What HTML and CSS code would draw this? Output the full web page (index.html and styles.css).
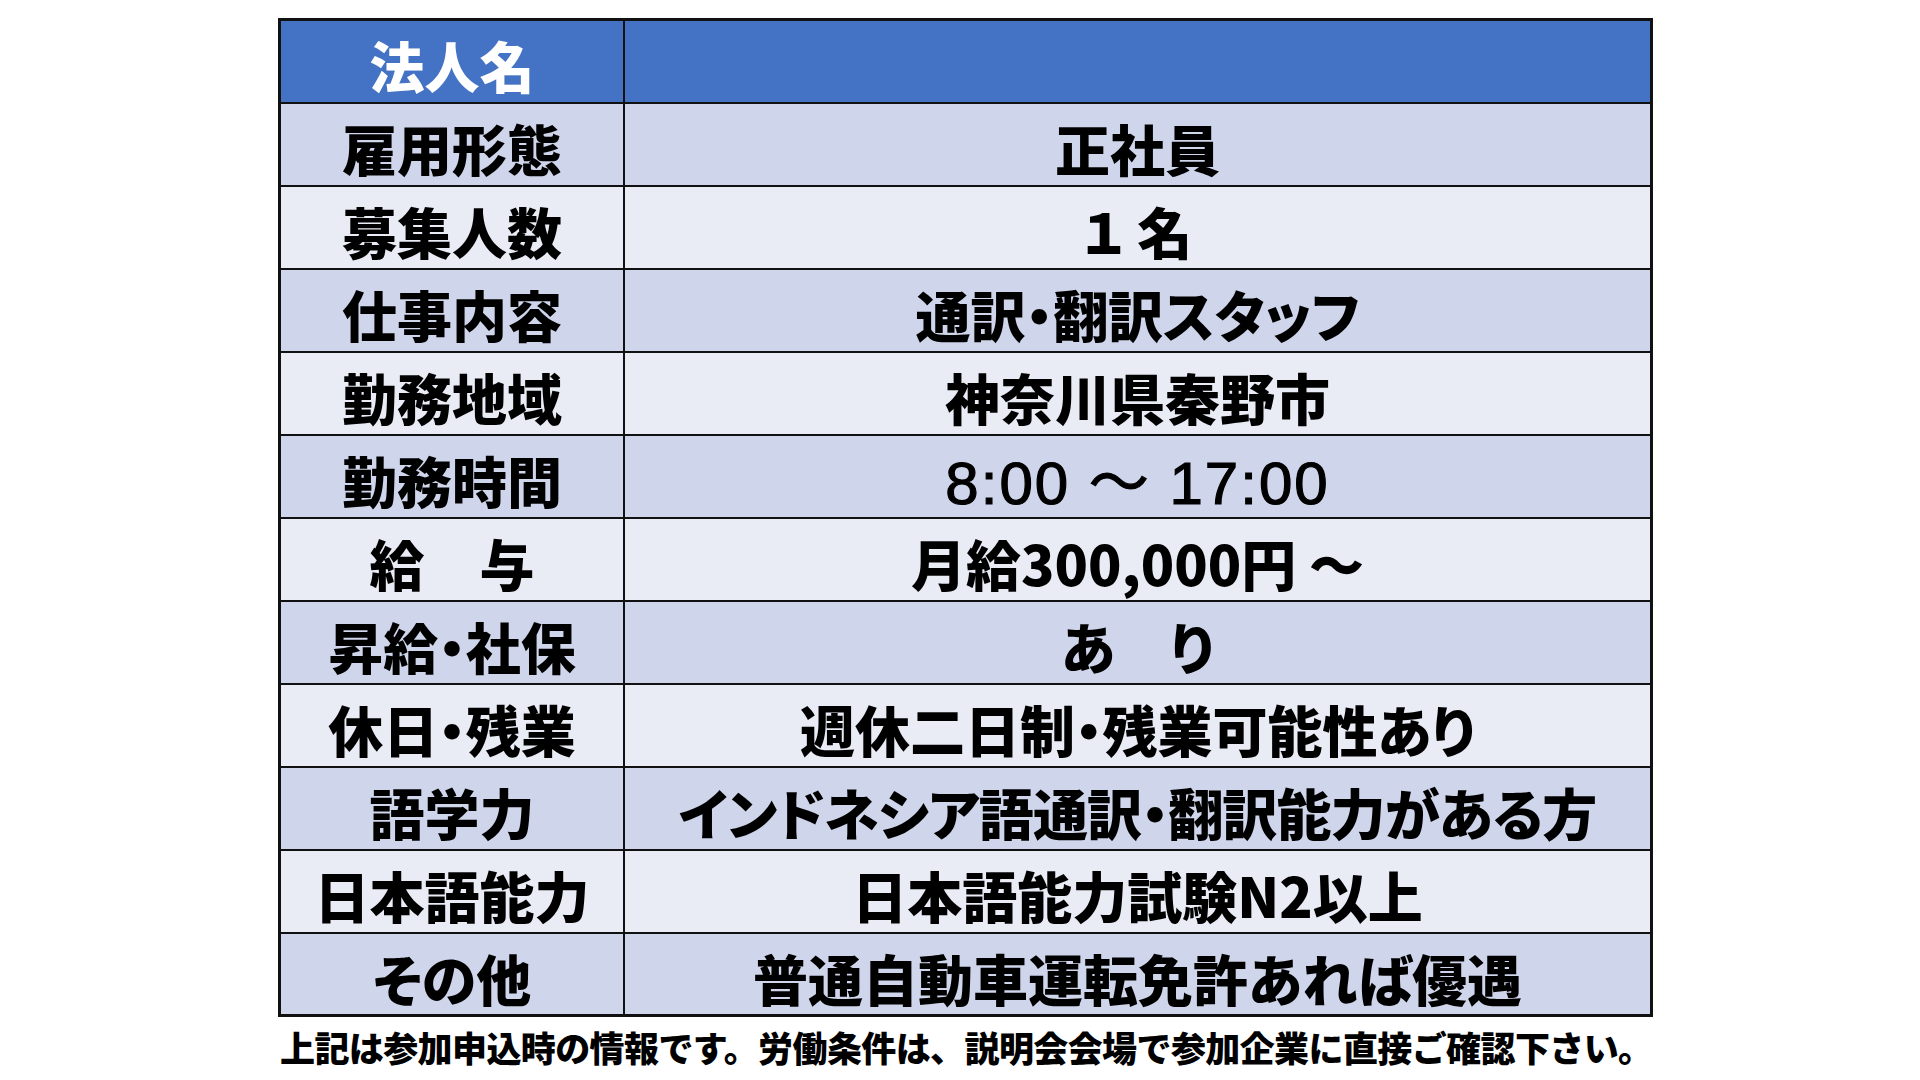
FILE: index.html
```html
<!DOCTYPE html>
<html lang="ja">
<head>
<meta charset="utf-8">
<title>求人情報</title>
<link rel="stylesheet" href="styles.css">
</head>
<body>
<div class="page">
  <table class="job">
    <tr class="head"><th class="lbl">法人名</th><td class="val"></td></tr>
    <tr class="dark"><th class="lbl">雇用形態</th><td class="val">正社員</td></tr>
    <tr class="light"><th class="lbl">募集人数</th><td class="val">１ 名</td></tr>
    <tr class="dark"><th class="lbl">仕事内容</th><td class="val">通訳・翻訳スタッフ</td></tr>
    <tr class="light"><th class="lbl">勤務地域</th><td class="val">神奈川県秦野市</td></tr>
    <tr class="dark"><th class="lbl">勤務時間</th><td class="val num">8:00 ～ 17:00</td></tr>
    <tr class="light"><th class="lbl">給　与</th><td class="val">月給300,000円 ～</td></tr>
    <tr class="dark"><th class="lbl">昇給・社保</th><td class="val">あ　り</td></tr>
    <tr class="light"><th class="lbl">休日・残業</th><td class="val">週休二日制・残業可能性あり</td></tr>
    <tr class="dark"><th class="lbl">語学力</th><td class="val tight">インドネシア語通訳・翻訳能力がある方</td></tr>
    <tr class="light"><th class="lbl">日本語能力</th><td class="val">日本語能力試験N2以上</td></tr>
    <tr class="dark"><th class="lbl">その他</th><td class="val">普通自動車運転免許あれば優遇</td></tr>
  </table>
  <p class="note">上記は参加申込時の情報です。労働条件は、説明会会場で参加企業に直接ご確認下さい。</p>
</div>
</body>
</html>
```
FILE: styles.css
```css
html, body {
  margin: 0;
  padding: 0;
  background: #ffffff;
}
body {
  font-family: "Noto Sans CJK JP", "Noto Sans", sans-serif;
  color: #000000;
}
.page {
  padding: 18px 0 0 278px;
  width: 1376px;
}
.job {
  border-collapse: collapse;
  width: 1375px;
  table-layout: fixed;
  border: 3px solid #111;
}
.job tr {
  height: 83px;
}
.job th, .job td {
  border: 2px solid #111;
  padding: 6px 0 0 0;
  text-align: center;
  vertical-align: middle;
  font-weight: 900;
  font-size: 55px;
  line-height: 60px;
  white-space: nowrap;
  font-feature-settings: "palt";
}
.job .lbl {
  width: 342px;
}
.head th, .head td {
  background: #4472c4;
  color: #ffffff;
}
.dark th, .dark td {
  background: #cfd5ea;
}
.light th, .light td {
  background: #e9ebf5;
}
.job .num {
  font-family: "Liberation Sans", "Noto Sans CJK JP", sans-serif;
  font-weight: 400;
  font-size: 60px;
  letter-spacing: 2px;
  padding-top: 16px;
  -webkit-text-stroke: 1.2px #000;
  font-feature-settings: normal;
}
.job .tight {
  letter-spacing: -0.8px;
}
.note {
  margin: 8px 0 0 2px;
  font-size: 35px;
  font-weight: 900;
  line-height: 44px;
  letter-spacing: -0.6px;
  white-space: nowrap;
}
```
